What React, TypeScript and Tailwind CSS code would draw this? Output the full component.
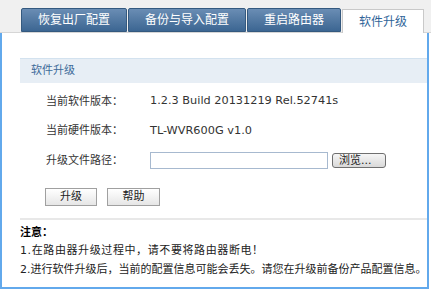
import React from 'react';

const tabs = ['恢复出厂配置', '备份与导入配置', '重启路由器', '软件升级'];

function Tab({ label, active }: { label: string; active: boolean }) {
  if (active) {
    return (
      <div className="-mb-px flex h-[24px] items-center border border-b-0 border-[#c9c9c9] bg-white px-[16px] text-[12px] text-[#2f6498]">
        {label}
      </div>
    );
  }
  return (
    <div className="flex h-[24px] items-center rounded-t-[2px] border border-[#34597f] bg-gradient-to-b from-[#6a8db4] to-[#3c6692] px-[16px] text-[12px] text-white">
      {label}
    </div>
  );
}

function InfoRow({ label, children }: { label: string; children: React.ReactNode }) {
  return (
    <div className="flex h-[29.5px] items-center pl-[26px]">
      <div className="w-[104px] text-[#333]">{label}</div>
      <div className="flex items-center text-[11.3px] text-[#333]">{children}</div>
    </div>
  );
}

export default function App() {
  return (
    <div
      className="h-[289px] w-[431px] overflow-hidden bg-white text-[11px]"
      style={{ fontFamily: "'DejaVu Sans', 'Noto Sans CJK SC', sans-serif" }}
    >
      <div className="flex h-[33px] items-end gap-px border-b border-[#d6d6d6] bg-[#f0f0f0] pl-[21px]">
        {tabs.map((t, i) => (
          <Tab key={t} label={t} active={i === 3} />
        ))}
      </div>

      <div className="h-[256px] w-[429px] border-x-2 border-b-2 border-[#62a9ec] pl-[18px] pt-[25px]">
        <div className="flex h-[25px] items-center border-t border-[#d3e2ef] bg-[#e7eef5] pl-[11px] text-[#3d6a99]">
          软件升级
        </div>

        <div className="mt-[4px]">
          <InfoRow label="当前软件版本：">1.2.3 Build 20131219 Rel.52741s</InfoRow>
          <InfoRow label="当前硬件版本：">TL-WVR600G v1.0</InfoRow>
          <InfoRow label="升级文件路径：">
            <div className="h-[17px] w-[178px] border border-[#a7b9cf] bg-white" />
            <button className="ml-[4px] flex h-[15px] w-[54px] items-center rounded-[3px] border border-[#6f6f6f] bg-gradient-to-b from-[#f6f6f6] to-[#d9d9d9] pl-[6px] text-[11px] leading-none text-[#222]">
              浏览...
            </button>
          </InfoRow>
        </div>

        <div className="ml-[25px] mt-[12px] flex gap-[10px]">
          <button className="h-[18px] w-[52px] border border-[#a0a0a0] bg-gradient-to-b from-white to-[#e6e6e6] text-[11px] leading-none text-[#222]">
            升级
          </button>
          <button className="h-[18px] w-[53px] border border-[#a0a0a0] bg-gradient-to-b from-white to-[#e6e6e6] text-[11px] leading-none text-[#222]">
            帮助
          </button>
        </div>

        <div className="mt-[12px] h-[2px] bg-[#e8e8e8]" />

        <div className="mt-[4px] leading-[18.5px] text-[#222]">
          <div className="font-bold text-black">注意：</div>
          <div className="tracking-[0.6px]">1.在路由器升级过程中，请不要将路由器断电！</div>
          <div>2.进行软件升级后，当前的配置信息可能会丢失。请您在升级前备份产品配置信息。</div>
        </div>
      </div>
    </div>
  );
}
